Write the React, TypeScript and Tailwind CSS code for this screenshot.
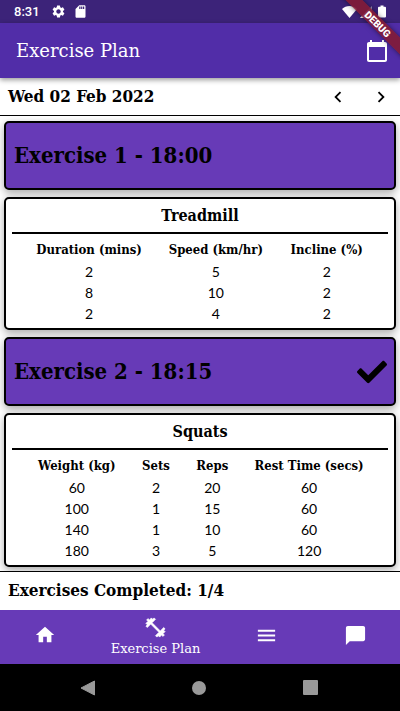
import React from "react";
import {
  MdSettings,
  MdSdCard,
  MdHome,
  MdMenu,
  MdChatBubble,
  MdCalendarToday,
  MdNavigateBefore,
  MdNavigateNext,
} from "react-icons/md";
import { FaCheck } from "react-icons/fa";

type Column = { label: string; width: string };
type Exercise = {
  heading: string;
  done: boolean;
  name: string;
  columns: Column[];
  rows: number[][];
};

const exercises: Exercise[] = [
  {
    heading: "Exercise 1 - 18:00",
    done: false,
    name: "Treadmill",
    columns: [
      { label: "Duration (mins)", width: "w-[37%]" },
      { label: "Speed (km/hr)", width: "w-[35%]" },
      { label: "Incline (%)", width: "w-[28%]" },
    ],
    rows: [
      [2, 5, 2],
      [8, 10, 2],
      [2, 4, 2],
    ],
  },
  {
    heading: "Exercise 2 - 18:15",
    done: true,
    name: "Squats",
    columns: [
      { label: "Weight (kg)", width: "w-[30%]" },
      { label: "Sets", width: "w-[15%]" },
      { label: "Reps", width: "w-[17%]" },
      { label: "Rest Time (secs)", width: "w-[38%]" },
    ],
    rows: [
      [60, 2, 20, 60],
      [100, 1, 15, 60],
      [140, 1, 10, 60],
      [180, 3, 5, 120],
    ],
  },
];

const slab = "font-['DejaVu_Serif_Condensed','DejaVu_Serif',serif]";
const wideSlab = "font-['DejaVu_Serif',serif]";

function StatusBar() {
  return (
    <div className="flex h-[23px] items-center bg-[#3c2379] pl-[14px] pr-[14px] text-white">
      <span className="font-['Roboto',sans-serif] text-[13px] font-medium">8:31</span>
      <MdSettings className="ml-[11px] size-[15px]" />
      <MdSdCard className="ml-[7px] size-[15px]" />
      <svg className="ml-auto h-3 w-[15px]" viewBox="0 0 15 12" fill="currentColor">
        <path d="M0 3C4-1 11-1 15 3L7.500 12Z" />
      </svg>
      <svg className="ml-[3px] size-3" viewBox="0 0 12 12" fill="currentColor">
        <path d="M12 0V12H0Z" opacity=".5" />
        <path d="M8 4V12H0Z" />
      </svg>
      <svg className="ml-[6px] h-[13px] w-2" viewBox="0 0 8 12" fill="currentColor">
        <path d="M2.500 0h3v1.200H7q1 0 1 1V11q0 1-1 1H1q-1 0-1-1V2.200q0-1 1-1h1.500Z" />
      </svg>
    </div>
  );
}

function DumbbellIcon() {
  return (
    <svg className="size-[23px]" viewBox="0 0 24 24" fill="currentColor" stroke="currentColor" strokeWidth="0.7">
      <path d="M20.57 14.86L22 13.43 20.57 12 17 15.57 8.43 7 12 3.43 10.57 2 9.14 3.43 7.71 2 5.57 4.14 4.14 2.71 2.71 4.14l1.43 1.43L2 7.71l1.43 1.43L2 10.57 3.43 12 7 8.43 15.57 17 12 20.57 13.43 22l1.43-1.43L16.29 22l2.14-2.14 1.43 1.43 1.43-1.43-1.43-1.43L22 16.29z" />
    </svg>
  );
}

function ExerciseCard({ exercise }: { exercise: Exercise }) {
  return (
    <>
      <button
        type="button"
        className="flex h-[69px] w-full items-center justify-between rounded-[5px] border-2 border-black bg-[#673ab7] pl-2 pr-[7px] text-left shadow-[0_3px_9px_rgba(0,0,0,0.35)]"
      >
        <span className="text-[22px] font-bold">{exercise.heading}</span>
        {exercise.done && <FaCheck className="size-[30px]" aria-label="Completed" />}
      </button>
      <section className="rounded-[5px] border-2 border-black bg-white px-[6px] pb-1 shadow-[0_3px_9px_rgba(0,0,0,0.35)]">
        <h2 className="mb-[5px] h-[35px] border-b-2 border-black text-center text-[16px] font-bold leading-[34px]">
          {exercise.name}
        </h2>
        <div className="px-3">
          <table className="w-full table-fixed border-collapse text-center">
            <thead>
              <tr className="h-[22px]">
                {exercise.columns.map((c) => (
                  <th key={c.label} className={`${c.width} whitespace-nowrap p-0 text-[13px] font-bold leading-5`}>
                    <span className="-mx-4">{c.label}</span>
                  </th>
                ))}
              </tr>
            </thead>
            <tbody className="font-['Lato',sans-serif] text-[14px] leading-5">
              {exercise.rows.map((row, i) => (
                <tr key={i} className="h-[21px]">
                  {row.map((v, j) => (
                    <td key={j} className="p-0">
                      {v}
                    </td>
                  ))}
                </tr>
              ))}
            </tbody>
          </table>
        </div>
      </section>
    </>
  );
}

export default function App() {
  return (
    <div className={`relative flex min-h-screen flex-col overflow-hidden bg-white text-black ${slab}`}>
      <StatusBar />
      <header className="z-10 flex h-[55px] items-center justify-between bg-[#512da8] pl-4 pr-[11px] text-white shadow-[0_2px_5px_rgba(0,0,0,0.4)]">
        <h1 className={`text-[18px] ${wideSlab}`}>Exercise Plan</h1>
        <button type="button" aria-label="Pick a date">
          <MdCalendarToday className="size-6" />
        </button>
      </header>

      <div className="flex h-[38px] items-center border-b border-black pl-2 pr-2">
        <span className="text-[17px] font-bold">Wed 02 Feb 2022</span>
        <button type="button" aria-label="Previous day" className="ml-auto">
          <MdNavigateBefore className="size-[22px]" />
        </button>
        <button type="button" aria-label="Next day" className="ml-[21px]">
          <MdNavigateNext className="size-[22px]" />
        </button>
      </div>

      <main className="flex flex-1 flex-col gap-[7px] overflow-hidden px-1 pb-1 pt-[5px]">
        {exercises.map((e) => (
          <ExerciseCard key={e.name} exercise={e} />
        ))}
      </main>

      <div className="flex h-[39px] items-center border-t border-black bg-white pl-2">
        <span className="text-[17px] font-bold">Exercises Completed: 1/4</span>
      </div>

      <nav className="grid h-[54px] grid-cols-[89fr_133fr_89fr_89fr] bg-[#673ab7] text-white">
        <a href="#home" aria-label="Home" className="flex items-center justify-center pb-1">
          <MdHome className="size-[22px]" />
        </a>
        <a href="#plan" className={`flex flex-col items-center justify-center text-[13px] leading-5 ${wideSlab}`}>
          <DumbbellIcon />
          Exercise Plan
        </a>
        <a href="#menu" aria-label="Menu" className="flex items-center justify-center pb-1">
          <MdMenu className="size-[23px]" />
        </a>
        <a href="#chat" aria-label="Messages" className="flex items-center justify-center pb-1">
          <MdChatBubble className="size-[23px]" />
        </a>
      </nav>

      <div className="flex h-[47px] items-center justify-around bg-black pl-8 pr-[34px] text-[#999]">
        <button type="button" aria-label="Back">
          <svg className="size-4" viewBox="0 0 16 16" fill="currentColor">
            <path d="M14.500 1V15L1 8Z" stroke="currentColor" strokeLinejoin="round" />
          </svg>
        </button>
        <button type="button" aria-label="Home screen" className="size-[14px] rounded-full bg-[#999]" />
        <button type="button" aria-label="Recent apps" className="size-[15px] rounded-[1px] bg-[#999]" />
      </div>

      <div className="pointer-events-none absolute right-0 top-0 z-20 size-[60px] overflow-hidden">
        <div className="absolute -right-[28px] top-[18px] flex h-3 w-[100px] rotate-45 items-center justify-center bg-[#821b35]/90 font-['Roboto',sans-serif] text-[10px] font-black text-white shadow-[0_0_5px_rgba(0,0,0,0.5)]">
          DEBUG
        </div>
      </div>
    </div>
  );
}
